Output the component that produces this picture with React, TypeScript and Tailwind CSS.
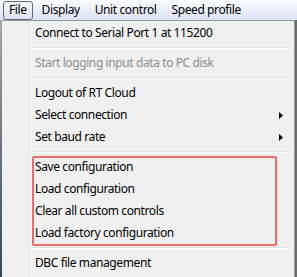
import { ReactNode } from 'react';

function Item({ label, disabled, submenu }: { label: string; disabled?: boolean; submenu?: boolean }) {
  return (
    <div className="h-[22px] flex items-center pl-[4px] pr-[10px]">
      <span className={`flex-1 ${disabled ? 'text-[#8d8d8d]' : 'text-black'}`}>{label}</span>
      {submenu && (
        <svg width="4" height="7" viewBox="0 0 4 7" className="mr-[1px]">
          <path d="M0 0 L4 3.5 L0 7 Z" fill="#000" />
        </svg>
      )}
    </div>
  );
}

function Separator() {
  return (
    <div className="h-[8px] flex flex-col justify-center pl-[1px] pr-[2px]">
      <div className="h-px bg-[#e0e0e0]" />
      <div className="h-px bg-white" />
    </div>
  );
}

function Highlight({ children }: { children: ReactNode }) {
  return (
    <div className="relative">
      {children}
      {/* red annotation box */}
      <div className="absolute left-[1px] top-0 w-[245px] h-[90px] border-2 border-[#f36a6a] rounded-[2px]" />
    </div>
  );
}

export default function App() {
  const menus = ['File', 'Display', 'Unit control', 'Speed profile'];

  return (
    <div
      className="w-[297px] h-[277px] overflow-hidden bg-[#f0f0f0] text-[12px] leading-none tracking-[-0.4px]"
      style={{ fontFamily: '"Noto Sans", "Open Sans", sans-serif' }}
    >
      {/* Menu bar */}
      <div className="h-[20px] flex items-center bg-gradient-to-b from-[#fbfcfe] to-[#dae2f3] pl-[3px]">
        {menus.map((m, i) => (
          <div
            key={m}
            className={`h-[19px] flex items-center px-[5px] mr-[3px] ${
              i === 0
                ? 'border border-[#5f6a78] rounded-[3px] bg-gradient-to-b from-[#f4f6f9] to-[#dfe5ee]'
                : 'border border-transparent'
            }`}
          >
            {m}
          </div>
        ))}
      </div>

      <div className="flex h-[257px]">
        {/* left edge */}
        <div className="w-[2px] bg-gradient-to-b from-[#a7a7a7] to-[#34485c]" />

        {/* Dropdown */}
        <div className="w-[293px] flex border-t border-r border-[#979797] pt-px">
          <div className="w-[29px] flex">
            <div className="flex-1" />
            <div className="w-px bg-[#e2e3e3]" />
            <div className="w-px bg-white" />
          </div>
          <div className="flex-1 flex flex-col">
            <Item label="Connect to Serial Port 1 at 115200" />
            <Separator />
            <Item label="Start logging input data to PC disk" disabled />
            <Separator />
            <Item label="Logout of RT Cloud" />
            <Item label="Select connection" submenu />
            <Item label="Set baud rate" submenu />
            <Separator />
            <Highlight>
              <Item label="Save configuration" />
              <Item label="Load configuration" />
              <Item label="Clear all custom controls" />
              <Item label="Load factory configuration" />
            </Highlight>
            <Separator />
            <Item label="DBC file management" />
          </div>
        </div>

        {/* right shadow */}
        <div className="w-[2px] bg-[#6e6e6e]" />
      </div>
    </div>
  );
}
